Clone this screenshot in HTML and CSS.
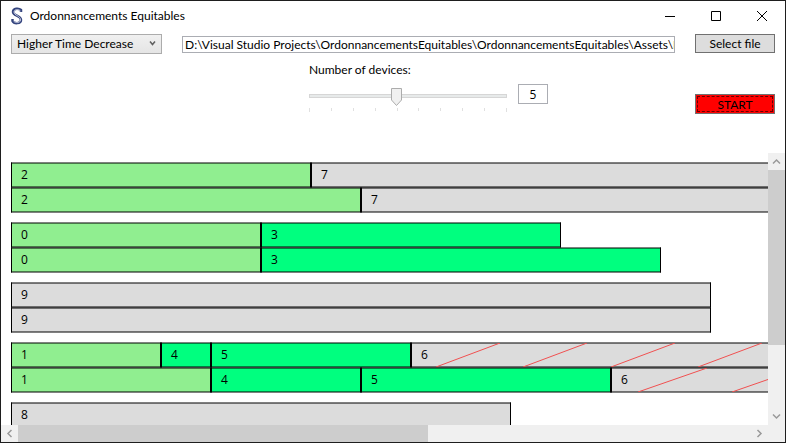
FILE: index.html
```
<!DOCTYPE html>
<html lang="en">
<head>
<meta charset="utf-8">
<title>Ordonnancements Equitables</title>
<link rel="stylesheet" href="styles.css">
</head>
<body>
<div class="window">
  <header class="titlebar">
    <svg class="logo" viewBox="0 0 12 18" aria-hidden="true">
      <path d="M10 5V3C8 1 2 1 2 5c0 4 8 3.500 8 8 0 4-7 4-8.500 1v-2" fill="none" stroke="#34447e" stroke-width="2.500"/>
      <path d="M9.500 4C8 2 3 2 3 5c0 3.500 6.500 3.500 6.500 8 0 3-5 3.500-7 1" fill="none" stroke="#c3c9de" stroke-width="1"/>
    </svg>
    <h1 class="title">Ordonnancements Equitables</h1>
    <button class="caption" aria-label="Minimize"><svg viewBox="0 0 10 10"><path d="M0 5.500h10"/></svg></button>
    <button class="caption" aria-label="Maximize"><svg viewBox="0 0 10 10"><path d="M.5.500h9v9h-9z"/></svg></button>
    <button class="caption" aria-label="Close"><svg viewBox="0 0 10 10"><path d="M0 0l10 10M10 0L0 10"/></svg></button>
  </header>

  <main class="content">
    <section class="controls">
      <div class="combo">
        <select class="combo-box" aria-label="Algorithm"><option>Higher Time Decrease</option></select>
        <svg class="combo-arrow" viewBox="0 0 7 5" aria-hidden="true"><path d="M1 .5l2.500 3L6 .5"/></svg>
      </div>
      <input class="path-box" type="text" aria-label="File path" value="D:\Visual Studio Projects\OrdonnancementsEquitables\OrdonnancementsEquitables\Assets\Merged.json">
      <button class="button">Select file</button>
      <div class="devices">
        <label class="devices-label" for="devices">Number of devices:</label>
        <div class="devices-row">
          <div class="slider">
            <input id="devices" class="range" type="range" min="1" max="10" value="5">
            <div class="ticks"><i></i><i></i><i></i><i></i><i></i><i></i><i></i><i></i><i></i><i></i></div>
          </div>
          <input class="count" type="text" aria-label="Device count" value="5">
        </div>
      </div>
      <button class="button start">START</button>
    </section>

    <section class="viewer">
      <div class="chart">
        <div class="group">
          <div class="row"><div class="job done" style="width:300px">2</div><div class="job" style="width:700px">7</div></div>
          <div class="row"><div class="job done" style="width:350px">2</div><div class="job" style="width:700px">7</div></div>
        </div>
        <div class="group">
          <div class="row"><div class="job done" style="width:250px">0</div><div class="job next" style="width:300px">3</div></div>
          <div class="row"><div class="job done" style="width:250px">0</div><div class="job next" style="width:400px">3</div></div>
        </div>
        <div class="group">
          <div class="row"><div class="job" style="width:700px">9</div></div>
          <div class="row"><div class="job" style="width:700px">9</div></div>
        </div>
        <div class="group">
          <div class="row"><div class="job done" style="width:150px">1</div><div class="job next" style="width:50px">4</div><div class="job next" style="width:200px">5</div><div class="job" style="width:700px">6<svg class="hatch" aria-hidden="true"><path d="M24 24l64-24M111 24l64-24M199 24l64-24M286 24l64-24M374 24l64-24"/></svg></div></div>
          <div class="row"><div class="job done" style="width:200px">1</div><div class="job next" style="width:150px">4</div><div class="job next" style="width:250px">5</div><div class="job" style="width:750px">6<svg class="hatch" aria-hidden="true"><path d="M26 24l69-24M120 24l69-24M214 24l69-24"/></svg></div></div>
        </div>
        <div class="group">
          <div class="row"><div class="job" style="width:500px">8</div></div>
        </div>
      </div>
      <div class="bar vertical">
        <button class="arrow" aria-label="Scroll up"><svg viewBox="0 0 9 9"><path d="M1 6.500L4.500 3 8 6.500"/></svg></button>
        <div class="track"><div class="thumb"></div></div>
        <button class="arrow" aria-label="Scroll down"><svg viewBox="0 0 9 9"><path d="M1 2.500L4.500 6 8 2.500"/></svg></button>
      </div>
      <div class="bar horizontal">
        <button class="arrow" aria-label="Scroll left"><svg viewBox="0 0 9 9"><path d="M6.500 1L3 4.500 6.500 8"/></svg></button>
        <div class="track"><div class="thumb"></div></div>
        <button class="arrow" aria-label="Scroll right"><svg viewBox="0 0 9 9"><path d="M2.500 1L6 4.500 2.500 8"/></svg></button>
      </div>
      <div class="corner"></div>
    </section>
  </main>
</div>
</body>
</html>
```
FILE: styles.css
```
* { box-sizing: border-box; }

body {
  margin: 0;
  background: #fff;
  color: #000;
  font: 12px/16px Lato, "Open Sans", sans-serif;
}

button, input, select {
  margin: 0;
  border-radius: 0;
  color: inherit;
  font: inherit;
}

.window {
  display: flex;
  flex-direction: column;
  height: 100vh;
  border: 1px solid #1e1e1e;
}

/* Title bar */
.titlebar {
  display: flex;
  align-items: center;
  height: 29px;
  padding-left: 10px;
}
.logo { width: 12px; height: 18px; margin-right: 7px; }
.title { flex: 1; margin: 0; font-size: 12px; font-weight: 400; }
.caption {
  display: grid;
  place-items: center;
  width: 46px;
  height: 29px;
  padding: 0;
  border: 0;
  background: none;
}
.caption svg { width: 10px; height: 10px; fill: none; stroke: #000; }

/* Controls */
.content { display: flex; flex: 1; flex-direction: column; min-height: 0; }
.controls {
  display: grid;
  grid-template-columns: 151px 1fr 80px;
  grid-template-rows: 20px 1fr;
  column-gap: 20px;
  height: 123px;
  padding: 4px 10px 0;
}
.combo { position: relative; }
.combo-box {
  width: 100%;
  height: 20px;
  padding: 0 5px;
  border: 1px solid #acacac;
  background: linear-gradient(#f0f0f0, #e5e5e5);
  appearance: none;
}
.combo-arrow {
  position: absolute;
  top: 7px;
  right: 6px;
  width: 7px;
  height: 5px;
  fill: none;
  stroke: #606060;
  stroke-width: 1.5;
  pointer-events: none;
}
.path-box {
  align-self: center;
  min-width: 0;
  height: 17px;
  padding: 0 0 0 2px;
  border: 1px solid #abadb3;
  background: #fff;
}
.button {
  height: 19px;
  padding: 0;
  border: 1px solid #707070;
  background: #ddd;
  line-height: 16px;
}
.start {
  grid-column: 3;
  height: 20px;
  margin-top: 40px;
  padding-top: 2px;
  background: #f00;
  outline: 1px dashed #600;
  outline-offset: -3px;
}
.devices {
  grid-column: 1 / 3;
  justify-self: end;
  width: 366px;
  padding-top: 8px;
}
.devices-label { display: block; }
.devices-row { display: flex; align-items: flex-start; gap: 11px; padding-top: 6px; }
.slider {
  width: 198px;
  padding-top: 4px;
  background: linear-gradient(#e7eaea, #e7eaea) 1px 11px / 196px 2px no-repeat,
    linear-gradient(#d6d6d6, #d6d6d6) 0 10px / 198px 4px no-repeat;
}
.range {
  display: block;
  width: 208px;
  height: 18px;
  margin: 0 -6px;
  background: none;
  appearance: none;
}
.range::-webkit-slider-thumb {
  width: 11px;
  height: 18px;
  background: url("data:image/svg+xml,%3Csvg xmlns='http://www.w3.org/2000/svg' viewBox='0 0 11 18'%3E%3Cpath d='M.5.5h10v11.500l-5 5.500-5-5.500z' fill='%23f0f0f0' stroke='%23acacac'/%3E%3C/svg%3E");
  appearance: none;
}
.ticks { display: flex; justify-content: space-between; margin-top: 2px; }
.ticks i { width: 1px; height: 3px; background: #e0e0e0; }
.ticks i:first-child, .ticks i:last-child { height: 4px; }
.count {
  width: 30px;
  height: 20px;
  padding: 0;
  border: 1px solid #abadb3;
  font-family: "Open Sans", sans-serif;
  text-align: center;
}

/* Schedule viewer */
.viewer {
  display: grid;
  flex: 1;
  grid-template-columns: minmax(0, 1fr) 17px;
  grid-template-rows: minmax(0, 1fr) 17px;
  min-height: 0;
  font-family: "Open Sans", sans-serif;
}
.chart {
  display: flex;
  flex-direction: column;
  gap: 9px;
  padding: 9px 10px;
  overflow: hidden;
}
.group { flex: none; }
.row { display: flex; }
.row + .row { margin-top: -1px; }
.job {
  position: relative;
  flex: none;
  height: 26px;
  padding: 4px 9px;
  border: 1px solid #000;
  border-block-color: rgba(0, 0, 0, .5);
  background: #dcdcdc padding-box;
  box-shadow: inset 0 1px rgba(0, 0, 0, .5), inset 0 -1px rgba(0, 0, 0, .5);
}
.done { background-color: #90ee90; }
.next { background-color: #00ff7f; }
.hatch {
  position: absolute;
  inset: 0;
  width: 100%;
  height: 100%;
  fill: none;
  stroke: #f05050;
}

/* Scroll bars */
.bar { display: flex; background: #f0f0f0; }
.vertical { flex-direction: column; }
.arrow {
  display: grid;
  flex: none;
  place-items: center;
  width: 17px;
  height: 17px;
  padding: 0;
  border: 0;
  background: none;
}
.arrow svg { width: 9px; height: 9px; fill: none; stroke: #999; stroke-width: 1.5; }
.track { flex: 1; }
.thumb { background: #cdcdcd; }
.vertical .thumb { height: 73.5%; }
.horizontal .thumb { width: 56%; height: 100%; }
.corner { background: #f0f0f0; }
```
